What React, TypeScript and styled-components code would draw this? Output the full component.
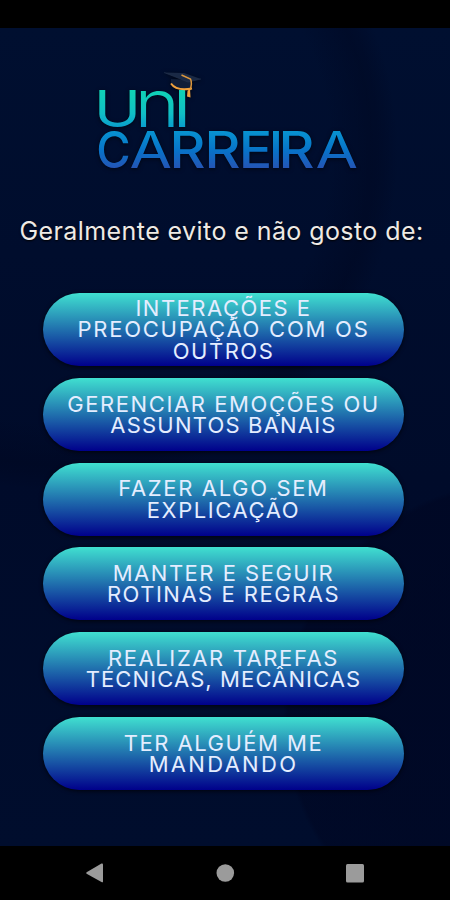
import React from 'react';
import styled, { createGlobalStyle } from 'styled-components';

const GlobalStyle = createGlobalStyle`
  * { box-sizing: border-box; }
  body { margin: 0; background: #000; }
`;

const Phone = styled.div`
  width: 450px;
  height: 900px;
  display: flex;
  flex-direction: column;
  overflow: hidden;
  background: #000;
  font-family: Inter, 'Open Sans', sans-serif;
`;

const StatusBar = styled.div`
  height: 28px;
  flex: none;
`;

const Screen = styled.main`
  height: 818px;
  flex: none;
  display: flex;
  flex-direction: column;
  align-items: center;
  background:
    radial-gradient(circle at 60px 125px, transparent 270px, rgba(0, 6, 30, 0.4) 312px, rgba(0, 6, 30, 0.32) 320px, transparent 338px),
    radial-gradient(circle at 520px 690px, rgba(0, 4, 30, 0.45) 150px, rgba(0, 4, 30, 0.38) 232px, transparent 237px),
    linear-gradient(180deg, #000f30, #000b2a 55%, #000d2d);
`;

const Logo = styled.svg`
  display: block;
  width: 270px;
  height: 110px;
  margin: 37px 0 0 4px;
  overflow: visible;
  font-family: Inter, sans-serif;
  font-size: 50.5px;
  filter: drop-shadow(0 1px 2px rgba(0, 0, 0, 0.6));
`;

const Question = styled.h1`
  margin: 40px 0 0;
  padding-right: 7px;
  height: 32px;
  line-height: 32px;
  font-size: 25px;
  font-weight: 400;
  white-space: nowrap;
  letter-spacing: 0.42px;
  color: #eeeae6;
  text-shadow: 0 1px 2px #000;
`;

const Options = styled.div`
  display: flex;
  flex-direction: column;
  gap: 11.8px;
  margin: 46px 3px 0 0;
`;

const OptionButton = styled.button`
  width: 361px;
  height: 73px;
  padding: 1px 0 0;
  border: 0;
  border-radius: 36.5px;
  display: flex;
  flex-direction: column;
  align-items: center;
  justify-content: center;
  font-family: inherit;
  color: #e4edff;
  background: linear-gradient(180deg, #40e0d0, #00008b);
  box-shadow: 0 1px 4px rgba(0, 0, 0, 0.75);
`;

const Line = styled.span<{ $spacing: number }>`
  font-size: 22px;
  line-height: 21.3px;
  font-weight: 400;
  white-space: nowrap;
  letter-spacing: ${(p) => p.$spacing}px;
`;

const NavBar = styled.nav`
  height: 54px;
  flex: none;
  display: flex;
  justify-content: space-between;
  align-items: center;
  padding: 0 85px;
`;

const NavIcon = styled.svg`
  width: 20px;
  height: 20px;
  fill: #9b9b9b;
`;

type OptionLine = [text: string, spacing: number];

const options: OptionLine[][] = [
  [['INTERAÇÕES E', 1.5], ['PREOCUPAÇÃO COM OS', 1.75], ['OUTROS', 1.5]],
  [['GERENCIAR EMOÇÕES OU', 1.6], ['ASSUNTOS BANAIS', 1.2]],
  [['FAZER ALGO SEM', 1.65], ['EXPLICAÇÃO', 1.6]],
  [['MANTER E SEGUIR', 1.5], ['ROTINAS E REGRAS', 1.5]],
  [['REALIZAR TAREFAS', 1.6], ['TÉCNICAS, MECÂNICAS', 1.1]],
  [['TER ALGUÉM ME', 1.5], ['MANDANDO', 2.3]],
];

/* Wordmark letters: baseline origin, horizontal stretch and weight of each one. */
const letters: { char: string; x: number; y: number; stretch: number; size?: number; weight?: number }[] = [
  { char: 'U', x: 93.8, y: 126.5, stretch: 1.26 },
  { char: 'n', x: 134.5, y: 126.5, stretch: 1.17, size: 66, weight: 300 },
  { char: 'I', x: 174.5, y: 126.5, stretch: 1.1, weight: 500 },
  { char: 'C', x: 96.3, y: 167.5, stretch: 0.93, weight: 500 },
  { char: 'A', x: 129.5, y: 167.5, stretch: 1.22 },
  { char: 'R', x: 169.5, y: 167.5, stretch: 1.1, weight: 500 },
  { char: 'R', x: 204.5, y: 167.5, stretch: 1.1, weight: 500 },
  { char: 'E', x: 238.8, y: 167.5, stretch: 1.1, weight: 500 },
  { char: 'I', x: 268.8, y: 167.5, stretch: 1.05, weight: 500 },
  { char: 'R', x: 278.5, y: 167.5, stretch: 1.1, weight: 500 },
  { char: 'A', x: 315.5, y: 167.5, stretch: 1.22 },
];

function BrandLogo() {
  return (
    <Logo viewBox="92 65 270 110" role="img" aria-label="UNI CARREIRA">
      <defs>
        {[126.5, 167.5].map((y) => (
          <linearGradient key={y} id={`brand${y}`} gradientUnits="userSpaceOnUse" x1="0" y1={90 - y} x2="0" y2={168 - y}>
            <stop offset="0" stopColor="#10d3b5" />
            <stop offset="0.3" stopColor="#10bfc5" />
            <stop offset="0.55" stopColor="#0790d0" />
            <stop offset="0.78" stopColor="#0872c8" />
            <stop offset="1" stopColor="#2455b5" />
          </linearGradient>
        ))}
      </defs>
      {letters.map(({ char, x, y, stretch, size = 50.5, weight = 400 }) => (
        <text
          key={x}
          transform={`translate(${x} ${y}) scale(${stretch} 1)`}
          fontSize={size}
          fontWeight={weight}
          fill={`url(#brand${y})`}
        >
          {char}
        </text>
      ))}
      <path d="M171 79V85Q177 91 190 90L192 80Z" fill="#101e38" />
      <path d="M164 72.5L184 73L201 79L188 82Z" fill="#1a2945" />
      <path d="M164 72.5L188 82L201 79" fill="none" stroke="#26354f" strokeWidth="0.6" />
      <path d="M171 83.5Q176.5 91.5 192 88.5" fill="none" stroke="#f0a13c" strokeWidth="2" />
      <path d="M181.5 75L190.5 79Q192.5 83 190 90" fill="none" stroke="#dc963c" strokeWidth="1.5" />
      <path d="M187.5 91L190 88.5L190.5 97.5L187 96.5Z" fill="#f0a13c" />
    </Logo>
  );
}

export default function App() {
  return (
    <Phone>
      <GlobalStyle />
      <StatusBar />
      <Screen>
        <BrandLogo />
        <Question>Geralmente evito e não gosto de:</Question>
        <Options>
          {options.map((lines) => (
            <OptionButton key={lines[0][0]}>
              {lines.map(([text, spacing]) => (
                <Line key={text} $spacing={spacing}>{text}</Line>
              ))}
            </OptionButton>
          ))}
        </Options>
      </Screen>
      <NavBar>
        <NavIcon viewBox="0 0 20 20"><path d="M1.6 9.2L16.5 .6Q18 .2 18 1.5V18.5Q18 19.8 16.5 19.1L1.6 10.7Q.8 10 1.6 9.2Z" /></NavIcon>
        <NavIcon viewBox="0 0 20 20"><circle cx="10.3" cy="10" r="8.8" /></NavIcon>
        <NavIcon viewBox="0 0 20 20"><rect x="1" y="1" width="18" height="18.4" rx="1.5" /></NavIcon>
      </NavBar>
    </Phone>
  );
}
